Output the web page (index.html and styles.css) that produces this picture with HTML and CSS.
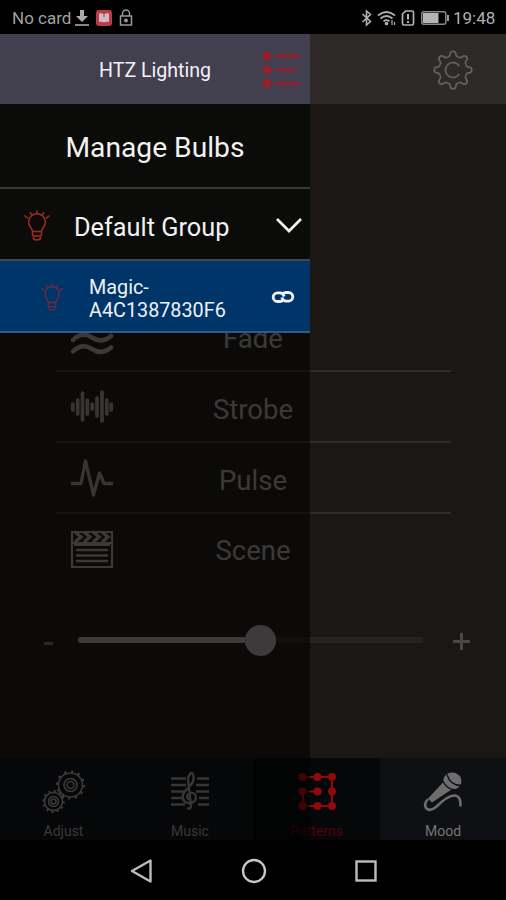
FILE: index.html
```
<!DOCTYPE html>
<html lang="en">
<head>
    <meta charset="UTF-8">
    <meta name="viewport" content="width=device-width, initial-scale=1.0">
    <title>HTZ Lighting</title>
    <link rel="stylesheet" href="styles.css">
</head>
<body>
    <div class="status-bar">
        <div class="status-left">
            <span class="carrier">No card</span>
            <svg class="icon-download" width="16" height="18" viewBox="0 0 16 18"><path d="M6 1h4v6h4l-6 6-6-6h4z" fill="#aaa"/><path d="M1 16h14" stroke="#aaa" stroke-width="1.6"/></svg>
            <svg class="icon-book" width="16" height="16" viewBox="0 0 16 16"><rect width="16" height="16" rx="3" fill="#b83c44"/><path d="M3 3.5q3-1 5 .8q2-1.800 5-.8v8.500q-3-.7-5 .6q-2-1.300-5-.6z" fill="#d0b8c4"/><path d="M8 4v3" stroke="#b83c44"/></svg>
            <svg width="14" height="18" viewBox="0 0 14 18" fill="none" stroke="#999" stroke-width="1.5"><path d="M3.500 7V4.500a3.500 3.500 0 0 1 7 0V7"/><rect x="1.500" y="7" width="11" height="9"/><circle cx="7" cy="11.500" r="1.200" fill="#999"/></svg>
        </div>
        <div class="status-right">
            <svg width="12" height="18" viewBox="0 0 12 18" fill="none" stroke="#b0b0b0" stroke-width="1.600"><path d="M1.500 5l8 7.500-4 3.500V2l4 3.500-8 7.500"/></svg>
            <svg width="20" height="18" viewBox="0 0 20 18" fill="none" stroke="#b0b0b0" stroke-width="1.700"><path d="M1 6.500q8.500-7 17 0M3.500 9.500q6-5 12 0M6.500 12.300q3-2.500 6 0"/><circle cx="9.500" cy="14.500" r="1" fill="#b0b0b0"/><path d="M15 11v5M17.500 13v3" stroke-width="1.200"/></svg>
            <svg width="14" height="18" viewBox="0 0 14 18" fill="none" stroke="#b0b0b0" stroke-width="1.700"><path d="M4.500 2H11q1.500 0 1.500 1.500v11Q12.500 16 11 16H3q-1.500 0-1.500-1.500V5z"/><path d="M7 5v5.500M7 12v2" stroke-width="2"/></svg>
            <svg class="icon-battery" width="28" height="16" viewBox="0 0 28 16"><rect x=".8" y="1.800" width="24" height="12.400" rx="2" fill="none" stroke="#888" stroke-width="1.500"/><rect x="2" y="3" width="15.500" height="10" fill="#b4b4b4"/><path d="M27 5v6" stroke="#999" stroke-width="2"/></svg>
            <span class="clock">19:48</span>
        </div>
    </div>

    <div class="app">
        <header class="app-header">
            <svg class="settings" width="40" height="40" viewBox="-20 -20 40 40" fill="none" stroke="#65615f" stroke-width="1.700">
                <g id="lobes">
                    <path id="lobe" d="M-5.550-13.400C-3.500-12.700-3.100-14.500-2.800-16.300C-2.400-19.600 2.400-19.600 2.800-16.300C3.100-14.500 3.500-12.700 5.550-13.400"/>
                    <use href="#lobe" transform="rotate(45)"/>
                    <use href="#lobe" transform="rotate(90)"/>
                    <use href="#lobe" transform="rotate(135)"/>
                    <use href="#lobe" transform="rotate(180)"/>
                    <use href="#lobe" transform="rotate(225)"/>
                    <use href="#lobe" transform="rotate(270)"/>
                    <use href="#lobe" transform="rotate(315)"/>
                </g>
                <path d="M6.300-4A7.500 7.500 0 1 0 6.300 4"/>
            </svg>
        </header>

        <main class="content">
            <ul class="modes">
                <li>
                    <svg width="44" height="44" viewBox="0 0 44 44" fill="none" stroke="#827f7c" stroke-width="4.500" stroke-linecap="round"><path d="M3 15q9-9 19-2.500t19-1.500M3 25q9-9 19-2.500t19-1.500M3 36.500q9-9 19-2.500t19-1.500"/></svg>
                    <span>Fade</span>
                </li>
                <li>
                    <svg width="44" height="44" viewBox="0 0 44 44" fill="none" stroke="#7a7774" stroke-width="3.700" stroke-linecap="round"><path d="M2.800 18v6M7.700 14v14M12.500 7v27M17.400 14v14M22.200 18v5M27 12v18M32 6v29M36.800 14v14M41.200 18v6"/></svg>
                    <span>Strobe</span>
                </li>
                <li>
                    <svg width="44" height="44" viewBox="0 0 44 44" fill="none" stroke="#7a7774" stroke-width="3.300" stroke-linejoin="round"><path d="M1 26.500h10L15.500 4l8 34 6-22 4.500 10.500h9"/></svg>
                    <span>Pulse</span>
                </li>
                <li>
                    <svg width="44" height="44" viewBox="0 0 44 44" fill="none" stroke="#827f7c" stroke-width="2.200"><path d="M2 4h40v35H2zM2 15h40" /><path d="M5 4l6 5-6 5M14 4l6 5-6 5M23 4l6 5-6 5M32 4l6 5-6 5" stroke-width="3.500"/><path d="M4 17h36" stroke-width="2"/><path d="M6 22h32M6 27.500h32M6 33h32" stroke-width="2.600"/></svg>
                    <span>Scene</span>
                </li>
            </ul>
            <div class="slider">
                <span class="minus"></span>
                <div class="track"><div class="fill"></div><div class="thumb"></div></div>
                <span class="plus"></span>
            </div>
        </main>

        <nav class="tabs">
            <div class="tab">
                <svg width="44" height="44" viewBox="0 0 44 44" fill="none" stroke="#86817f" stroke-width="1.500">
                    <circle cx="28.500" cy="15" r="12"/><circle cx="28.500" cy="15" r="13.400" stroke-width="2.400" stroke-dasharray="2.400 4.620"/><circle cx="28.500" cy="15" r="6.500"/><circle cx="28.500" cy="15" r="3.500"/>
                    <circle cx="11.500" cy="31.500" r="9"/><circle cx="11.500" cy="31.500" r="10.300" stroke-width="2.200" stroke-dasharray="2 3.390"/><circle cx="11.500" cy="31.500" r="5"/><circle cx="11.500" cy="31.500" r="2.500"/>
                </svg>
                <span>Adjust</span>
            </div>
            <div class="tab">
                <svg width="44" height="44" viewBox="0 0 44 44" fill="none" stroke="#7a7572" stroke-width="2.400">
                    <path d="M3 8.500h15M29 8.500h12M3 15h15M28 15h13M3 21.500h14M28 21.500h13M3 28h11M31 28h10M3 34.500h14M30 34.500h11"/>
                    <path d="M23 35L20 10C20 4 24 1.500 25 4C27 11 24 14 20 18C14 23 13 28 17 32C22 35 28 32 28 27C27 21 19 22 19 27Q20 30 22 29M23 35Q23 40 19 38"/>
                </svg>
                <span>Music</span>
            </div>
            <div class="tab active">
                <svg width="44" height="44" viewBox="0 0 44 44" fill="currentColor">
                    <path d="M8 7h29v29H8V21.500h15" fill="none" stroke="currentColor" stroke-width="2"/>
                    <circle cx="7.500" cy="7" r="4"/><circle cx="22.500" cy="7" r="4"/><circle cx="37" cy="7" r="4"/>
                    <circle cx="7.500" cy="21.500" r="4"/><circle cx="22.500" cy="21.500" r="4"/><circle cx="37" cy="21.500" r="4"/>
                    <circle cx="7.500" cy="36" r="4"/><circle cx="22.500" cy="36" r="4"/><circle cx="37" cy="36" r="4"/>
                </svg>
                <span>Patterns</span>
            </div>
            <div class="tab mood">
                <svg width="44" height="44" viewBox="-2 0 44 44">
                    <path d="M20 12.500q0-7 6-9.500 7-2 11.500 4 2.500 6-2 10.500-3 2.500-7 2L9 32.500l-4-4z" fill="#6d6d6e"/>
                    <path d="M20 11q3 8 13 9M24 4.500q3 11 14 11" fill="none" stroke="#0f1013" stroke-width="1.300"/>
                    <path d="M5 29Q.5 34 3 38Q7 42 13 37C20 30 26 25 32 25.500Q38 26 37.500 36.500" fill="none" stroke="#6d6d6e" stroke-width="2.600"/>
                </svg>
                <span>Mood</span>
            </div>
        </nav>

        <aside class="drawer">
            <div class="drawer-header">
                <h1>HTZ Lighting</h1>
                <svg class="list-icon" width="38" height="40" viewBox="0 0 38 40" fill="#a01c29"><circle cx="5" cy="6" r="4.300"/><circle cx="5" cy="19.700" r="4.300"/><circle cx="5" cy="33.300" r="4.300"/><path d="M13 6h25M13 19.700h21M13 33.300h25" stroke="#94202f" stroke-width="3"/></svg>
            </div>
            <h2>Manage Bulbs</h2>
            <div class="group">
                <svg class="bulb" width="28" height="32" viewBox="0 0 28 32">
                    <g id="bulb" fill="none" stroke="currentColor" stroke-width="1.500"><path d="M9.500 21.500q0-2-2-4.200a8.300 8.300 0 1 1 13 0q-2 2.200-2 4.200zM9.500 21.500v3q0 1.500 1.500 1.500h6q1.500 0 1.500-1.500v-3M10.500 26v2.300q.5 1.700 3.500 1.700t3.500-1.700V26"/><path d="M14 .5v3.500M7 2l1.800 3.300M21 2l-1.800 3.300M1.300 5.500l4 3M26.700 5.500l-4 3"/></g>
                </svg>
                <span>Default Group</span>
                <svg class="chevron" width="28" height="18" viewBox="0 0 28 18"><path d="M2 2l12 12L26 2" fill="none" stroke="#f2f2f2" stroke-width="2.700"/></svg>
            </div>
            <div class="device">
                <svg class="bulb" width="24" height="29" viewBox="0 0 28 32" preserveAspectRatio="none"><use href="#bulb"/></svg>
                <span>Magic-<br>A4C1387830F6</span>
                <svg class="link" width="24" height="14" viewBox="0 0 24 14" fill="none" stroke="#eef1f6" stroke-width="2.800"><path d="M13 9.500Q11.500 11.500 9 11.500H6.500a4.300 4.300 0 0 1 0-8.600H9Q12 3 13.200 6.500"/><path d="M11 4.500Q12.500 2.500 15 2.500h2.500a4.300 4.300 0 0 1 0 8.600H15Q12 11 10.800 7.500"/></svg>
            </div>
            <div class="shade"></div>
        </aside>
    </div>

    <div class="nav-bar">
        <svg width="24" height="26" viewBox="0 0 24 26"><path d="M20.500 2.500v21L2 13z" fill="none" stroke="#bdbdbd" stroke-width="2.400" stroke-linejoin="round"/></svg>
        <svg width="26" height="26" viewBox="0 0 26 26"><circle cx="13" cy="13" r="11" fill="none" stroke="#c8c8c8" stroke-width="2.300"/></svg>
        <svg width="24" height="24" viewBox="0 0 24 24"><rect x="2.500" y="2.500" width="19" height="19" fill="none" stroke="#bdbdbd" stroke-width="2.400"/></svg>
    </div>
</body>
</html>
```
FILE: styles.css
```
* {
    box-sizing: border-box;
}

body {
    margin: 0;
    width: 506px;
    height: 900px;
    display: flex;
    flex-direction: column;
    background: #000;
    font-family: Roboto, sans-serif;
    overflow: hidden;
}

svg {
    display: block;
    flex-shrink: 0;
}

h1, h2, ul {
    margin: 0;
    padding: 0;
    font-weight: 400;
}

/* android status bar */
.status-bar {
    height: 34px;
    padding: 2px 10px 0 12px;
    display: flex;
    justify-content: space-between;
    color: #a0a0a0;
    font-size: 17px;
}

.status-left, .status-right {
    display: flex;
    align-items: center;
}

.carrier {
    width: 62px;
    white-space: nowrap;
}

.icon-download {
    margin-right: 6px;
}

.icon-book {
    margin-right: 7px;
}

.status-right {
    gap: 4px;
}

.icon-battery {
    margin-left: 2px;
}

.clock {
    color: #b0b0b0;
    width: 43px;
    white-space: nowrap;
}

/* app */
.app {
    position: relative;
    height: 806px;
    display: flex;
    flex-direction: column;
    background: #1b1714;
}

.app-header {
    height: 70px;
    padding: 16px 33px 0 0;
    display: flex;
    justify-content: flex-end;
    background: #2d2a28;
}

.content {
    height: 654px;
    padding-top: 197px;
}

.modes {
    margin: 0 55px 0 56px;
    list-style: none;
}

.modes li {
    height: 71px;
    padding-top: 3px;
    display: grid;
    grid-template-columns: 72px 1fr 73px;
    align-items: center;
    justify-items: center;
    border-bottom: 2px solid #2f2c29;
    color: #827f7c;
    font-size: 27.5px;
}

.modes li span {
    padding-top: 2px;
}

.modes li:last-child {
    padding-top: 0;
    border-bottom: none;
}

.slider {
    height: 90px;
    margin-top: 10px;
    padding: 0 36px 0 44px;
    display: flex;
    align-items: center;
}

.minus {
    width: 9px;
    height: 3px;
    margin: 6px 25px 0 0;
    background: #5e5b58;
}

.track {
    width: 345px;
    height: 6px;
    display: flex;
    align-items: center;
    border-radius: 3px;
    background: #262320;
}

.fill {
    width: 167px;
    height: 6px;
    border-radius: 3px 0 0 3px;
    background: #858280;
}

.thumb {
    width: 31px;
    height: 31px;
    border-radius: 50%;
    background: #858280;
}

.plus {
    width: 17px;
    height: 17px;
    margin: 3px 0 0 30px;
    background:
        linear-gradient(#4a4744, #4a4744) center / 17px 3px no-repeat,
        linear-gradient(#4a4744, #4a4744) center / 3px 17px no-repeat;
}

.tabs {
    height: 82px;
    display: grid;
    grid-template-columns: 127px 126px 127px 126px;
    background: #0f1013;
}

.tab {
    padding-top: 12px;
    display: flex;
    flex-direction: column;
    align-items: center;
    gap: 8px;
    color: #807b79;
    font-size: 14px;
    line-height: 18px;
}

.tab.active {
    background: #060708;
    color: #8e0a0c;
}

.tab.active span {
    color: #500407;
}

.tab.mood {
    color: #747475;
}

/* side drawer lies over the page */
.drawer {
    position: absolute;
    top: 0;
    left: 0;
    width: 310px;
    height: 100%;
    display: flex;
    flex-direction: column;
}

.drawer-header {
    height: 70px;
    padding: 2px 10px 0 99px;
    display: flex;
    align-items: center;
    justify-content: space-between;
    background: #423f4f;
}

.drawer h1 {
    color: #f2f2f6;
    font-size: 19.6px;
}

.drawer h2 {
    height: 85px;
    padding-top: 3px;
    line-height: 82px;
    text-align: center;
    background: #0b0b09;
    border-bottom: 2px solid #3a3a38;
    color: #f2f2f2;
    font-size: 28.2px;
}

.group {
    height: 72px;
    padding: 4px 7px 0 23px;
    display: flex;
    align-items: center;
    background: #0b0b09;
    border-bottom: 2px solid #40484f;
    color: #f2f2f2;
    font-size: 25.3px;
}

.group .bulb {
    margin-right: 23px;
    color: #a52a20;
}

.group span {
    padding-top: 2px;
}

.chevron, .link {
    margin-left: auto;
}

.device {
    height: 72px;
    padding: 2px 15px 0 40px;
    display: flex;
    align-items: center;
    background: #00356a;
    border-bottom: 2px solid #33597f;
    color: #eef1f6;
    font-size: 19.8px;
    line-height: 23px;
}

.device span {
    padding-top: 3px;
}

.device .bulb {
    margin-right: 25px;
    color: #74283f;
}

.shade {
    flex: 1;
    background: rgba(0, 0, 0, 0.55);
}

/* android navigation */
.nav-bar {
    height: 60px;
    padding: 1px 128px 0 130px;
    display: flex;
    align-items: center;
    justify-content: space-between;
}
```
